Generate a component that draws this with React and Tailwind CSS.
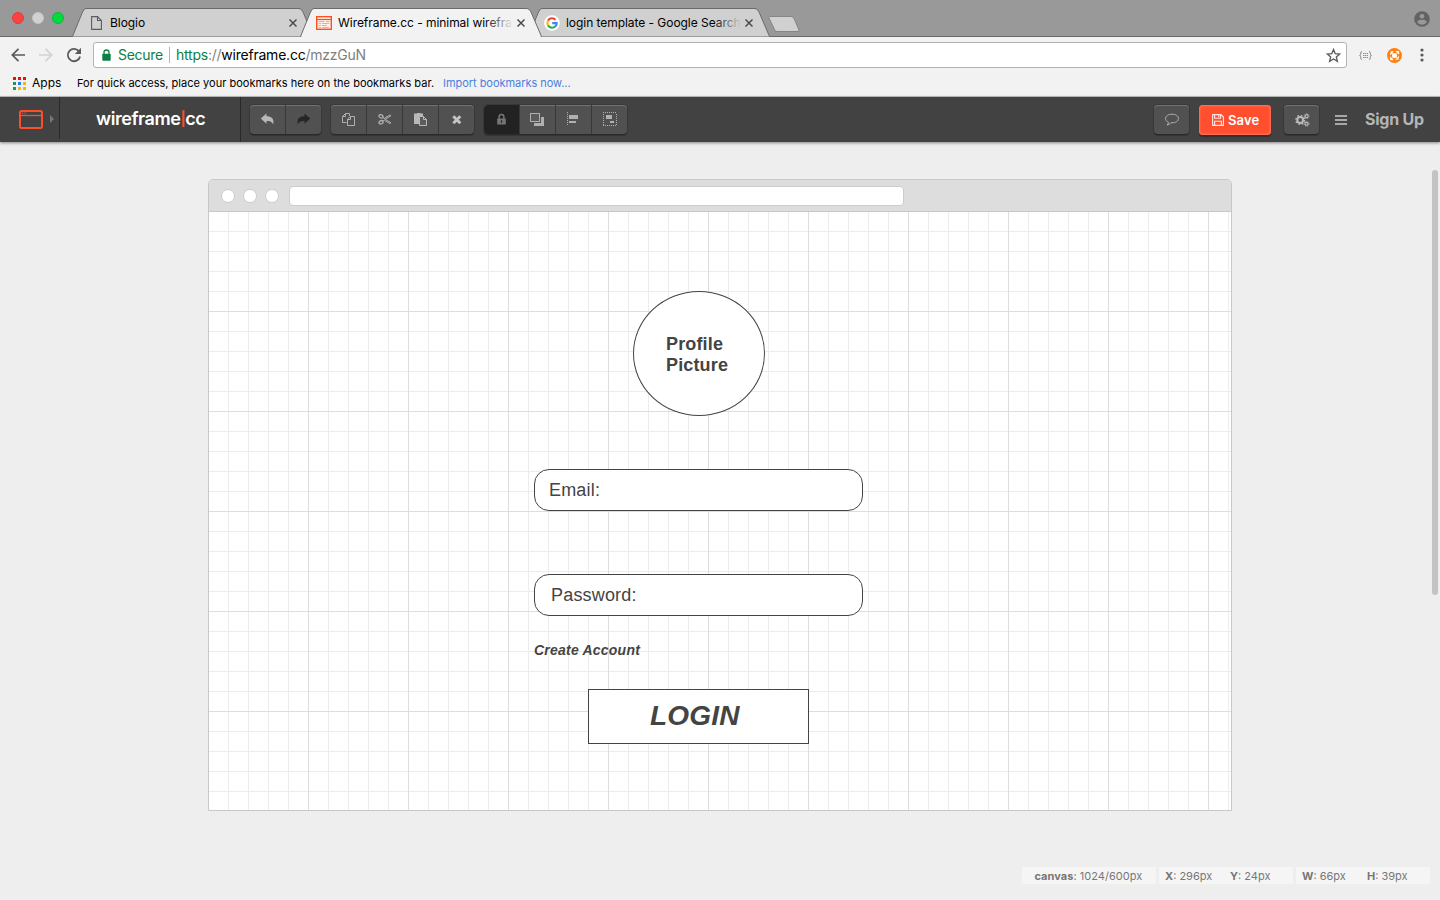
import React from "react";

function TabShape({ fill }) {
  return (
    <svg className="absolute inset-0" width="242" height="29" viewBox="0 0 242 29">
      <path d="M0.5 28.5 L10.5 4 Q12 0.5 14 0.5 L227 0.5 Q229.500 0.5 231 4 L241.500 28.500" fill={fill} stroke="#6a6a6a" />
    </svg>
  );
}

function CloseX() {
  return (
    <svg className="shrink-0" width="8" height="8" viewBox="0 0 8 8">
      <path d="M0.500 0.500 L7.500 7.500 M7.500 0.500 L0.500 7.500" stroke="#4b4b4b" strokeWidth="1.500" />
    </svg>
  );
}

function Tab({ active, icon, title, textClass }) {
  return (
    <div className={`relative -mr-3.5 h-[29px] w-[242px] shrink-0 ${active ? "z-10" : ""}`}>
      <TabShape fill={active ? "#f2f2f2" : "#d0d0d0"} />
      {active && <div className="absolute bottom-0 left-0.5 h-px w-[238px] bg-[#f2f2f2]" />}
      <div className="relative flex h-full items-center pl-4">
        <div className="flex w-[22px] shrink-0 items-center">{icon}</div>
        <div className="relative w-[175px] whitespace-nowrap text-[12px] leading-4 text-black">
          <span className={textClass}>{title}</span>
          <div className={`absolute inset-y-0 right-0 w-7 bg-linear-to-r from-transparent ${active ? "to-[#f2f2f2]" : "to-[#d0d0d0]"}`} />
        </div>
        <div className="ml-1"><CloseX /></div>
      </div>
    </div>
  );
}

const PageIcon = () => (
  <svg className="ml-[3px]" width="11" height="14" viewBox="0 0 11 14" fill="none" stroke="#5c5c5c" strokeWidth="1.100">
    <path d="M0.600 0.600 H6.500 L10.400 4.500 V13.400 H0.600 Z M6.500 0.600 V4.500 H10.400" />
  </svg>
);

const WireIcon = () => (
  <svg width="16" height="14" viewBox="0 0 16 14">
    <rect x="0.700" y="0.700" width="14.600" height="12.600" fill="#fff0e8" stroke="#ff4f1f" strokeWidth="1.400" />
    <path d="M1 3.500H15" stroke="#ff4f1f" strokeWidth="1.200" />
    <path d="M2 2.100h1M4 2.100h1M6 2.100h8" stroke="#ffd9c8" strokeWidth="0.900" />
    <path d="M2.500 5.500h6M10 5.500h3.500M2.500 7.500h2.500M6 7.500h7.500M2.500 9.500h2.500M6 9.500h5M2.500 11.500h2.500M6 11.500h7" stroke="#ffa580" />
  </svg>
);

const GoogleIcon = () => (
  <svg width="16" height="16" viewBox="0 0 16 16">
    <circle cx="8" cy="8" r="7.800" fill="#fff" />
    <g fill="none" strokeWidth="2.100">
      <path d="M4 5.600A4.700 4.700 0 0 1 11.500 4.800" stroke="#ea4335" />
      <path d="M4 5.600A4.700 4.700 0 0 0 4 10.500" stroke="#fbbc05" />
      <path d="M4 10.400A4.700 4.700 0 0 0 11.200 11.500" stroke="#34a853" />
      <path d="M11.100 11.500A4.700 4.700 0 0 0 12.700 8.100H8.200" stroke="#4285f4" />
    </g>
  </svg>
);

function TitleBar() {
  return (
    <div className="flex h-[37px] items-end border-b border-[#6a6a6a] bg-[#999999]">
      <div className="flex h-[37px] w-[72px] shrink-0 items-center gap-2 pl-3">
        <span className="size-3 rounded-full border border-[#e33b3c] bg-[#fd4245]" />
        <span className="size-3 rounded-full border border-[#c4c4c4] bg-[#d2d2d2]" />
        <span className="size-3 rounded-full border border-[#03bf37] bg-[#04d940]" />
      </div>
      <div className="-mb-px flex">
        <Tab title="Blogio" icon={<PageIcon />} textClass="tracking-[-0.05px]" />
        <Tab active title="Wireframe.cc - minimal wirefra" icon={<WireIcon />} textClass="tracking-[-0.05px]" />
        <Tab title="login template - Google Search" icon={<GoogleIcon />} textClass="tracking-[-0.05px]" />
      </div>
      <svg className="mb-[3px] ml-[11px]" width="34" height="18" viewBox="0 0 34 18">
        <path d="M2.500 1.500H24Q26 1.500 27 3.500L32 15Q32.500 16.500 31 16.500H10Q8.500 16.500 7.500 14.500L2 3Q1.500 1.500 2.500 1.500Z" fill="#d0d0d0" stroke="#858585" />
      </svg>
      <svg className="mr-2.5 mb-[9px] ml-auto" width="16" height="16" viewBox="0 0 16 16">
        <circle cx="8" cy="8" r="7.800" fill="#636363" />
        <circle cx="8" cy="5.300" r="2.300" fill="#999" />
        <path d="M3.300 11.200C3.300 9.400 6 8.700 8 8.700S12.700 9.400 12.700 11.200C11.600 12.800 10 13.500 8 13.500S4.400 12.800 3.300 11.200Z" fill="#999" />
      </svg>
    </div>
  );
}

function AddressBar() {
  return (
    <div className="flex h-[33px] items-center bg-[#f2f2f2] pt-[3px]">
      <div className="flex w-[93px] shrink-0 items-center pl-[11px]">
        <svg width="14" height="14" viewBox="0 0 14 14" fill="none" stroke="#5a5a5a" strokeWidth="1.700"><path d="M14 7H1.500M7.500 0.800L1.300 7L7.500 13.200" /></svg>
        <svg className="ml-[14px]" width="14" height="14" viewBox="0 0 14 14" fill="none" stroke="#d3d3d3" strokeWidth="1.700"><path d="M0 7H12.500M6.500 0.800L12.700 7L6.500 13.200" /></svg>
        <svg className="ml-[13px]" width="16" height="16" viewBox="0 0 16 16"><path d="M13.200 4.500A6.200 6.200 0 1 0 14.100 9.500" fill="none" stroke="#5a5a5a" strokeWidth="1.800" /><path d="M15 0.800V7H8.800Z" fill="#5a5a5a" /></svg>
      </div>
      <div className="flex h-[26px] w-[1254px] items-center rounded-[3px] border border-[#b3b3b3] bg-white pr-[5px] pl-2 text-[14px] leading-5 whitespace-nowrap">
        <svg width="9" height="12" viewBox="0 0 9 12"><path d="M2 5.500V3.500a2.500 2.500 0 0 1 5 0v2" fill="none" stroke="#0b8043" strokeWidth="1.300" /><rect x="0.300" y="4.800" width="8.400" height="6.900" rx="0.800" fill="#0b8043" /></svg>
        <span className="ml-[7px] w-[45px] tracking-[-0.3px] text-[#0b8043]">Secure</span>
        <span className="mx-[6px] h-4 w-px bg-[#b5b5b5]" />
        <span className="tracking-[-0.23px] text-[#808080]"><span className="text-[#0b8043]">https</span>://<span className="text-black">wireframe.cc</span>/mzzGuN</span>
        <svg className="ml-auto" width="15" height="15" viewBox="0 0 15 15"><path d="M7.500 1.500L9.200 5.600L13.700 6L10.300 8.900L11.400 13.300L7.500 10.900L3.600 13.300L4.700 8.900L1.300 6L5.800 5.600Z" fill="none" stroke="#5a5a5a" strokeWidth="1.300" /></svg>
      </div>
      <div className="flex flex-1 items-center pl-[12px]">
        <svg width="13" height="9" viewBox="0 0 13 9" fill="none" stroke="#8f8f8f"><path d="M3 0.500Q1.700 0.500 1.700 2V3.200Q1.700 4.500 0.500 4.500Q1.700 4.500 1.700 5.800V7Q1.700 8.500 3 8.500M10 0.500Q11.300 0.500 11.300 2V3.200Q11.300 4.500 12.500 4.500Q11.300 4.500 11.300 5.800V7Q11.300 8.500 10 8.500" /><path d="M4 2.500H9M4 4.500H9M4 6.500H9" strokeDasharray="1.400 0.400" /></svg>
        <svg className="ml-[15px]" width="15" height="15" viewBox="0 0 15 15"><circle cx="7.500" cy="7.500" r="7.400" fill="#ff7f0e" /><circle cx="7.500" cy="7.500" r="2.500" fill="#fff" /><path d="M3.300 6.800A4.400 4.400 0 0 1 6.300 3.300M8.800 3.200L11.500 3.500L11.700 6.300M11.700 8.500A4.400 4.400 0 0 1 8.500 11.700M6.300 11.800L3.600 11.400L3.300 8.800M3.800 3.500L5.700 5.500M11.500 11.500L9.400 9.400M3.500 11.500L5.500 9.500M11.500 3.500L9.500 5.500" fill="none" stroke="#fff" strokeWidth="1.100" /></svg>
        <svg className="ml-[18px]" width="4" height="14" viewBox="0 0 4 14" fill="#5a5a5a"><circle cx="2" cy="2" r="1.600" /><circle cx="2" cy="7" r="1.600" /><circle cx="2" cy="12" r="1.600" /></svg>
      </div>
    </div>
  );
}

const DOTS = ["bg-[#f20d0d]", "bg-[#f20d0d]", "bg-[#f20d0d]", "bg-[#109d58]", "bg-[#1b7ff0]", "bg-[#fdb205]", "bg-[#109d58]", "bg-[#fdb205]", "bg-[#fdb205]"];

function Bookmarks() {
  return (
    <div className="flex h-[27px] items-center border-b border-[#c2c2c2] bg-[#f2f2f2] pl-[13px] text-[11px] leading-4 whitespace-nowrap text-black">
      <div className="grid grid-cols-3 gap-[2px]">
        {DOTS.map((c, i) => <span key={i} className={`size-[3px] ${c}`} />)}
      </div>
      <span className="ml-[6px] w-[45px] text-[12px]">Apps</span>
      <span className="w-[366px] tracking-[0.02px]">For quick access, place your bookmarks here on the bookmarks bar.</span>
      <span className="tracking-[-0.04px] text-[#4a7fe0]">Import bookmarks now...</span>
    </div>
  );
}

const ICON = {
  undo: <path d="M6.500 1.500V4.200C11 4.200 14.500 6 13.200 12.500C12 9.500 10 8.900 6.500 8.900V11.700L0.800 6.600Z" fill="#b8b8b8" />,
  redo: <path d="M7.500 1.500V4.200C3 4.200 -0.500 6 0.800 12.500C2 9.500 4 8.900 7.500 8.900V11.700L13.200 6.600Z" fill="#262626" />,
  copy: <path d="M5.500 10.500H1.500V4.500L4.500 1.500H8.500V4M4.500 1.500V4.500H1.500M6.500 7L9.500 4.500H13.500V13.500H6.500ZM9.500 4.500V7.500H6.500" fill="none" stroke="#b0b0b0" />,
  cut: <g fill="none" stroke="#b0b0b0"><ellipse cx="3" cy="4.300" rx="2.100" ry="1.600" transform="rotate(25 3 4.300)" strokeWidth="1.300" /><ellipse cx="3" cy="10.300" rx="2.100" ry="1.600" transform="rotate(-25 3 10.300)" strokeWidth="1.300" /><path d="M4.800 5.500L7.500 7L13 3.700L11.800 3.100L7 5.900M4.800 9.100L7.500 7.500L13 10.800L11.800 11.500L7 8.700" strokeWidth="1" /></g>,
  paste: <g><path d="M0 1.500H3V1H6.500V1.500H9V4H5.500V12H0Z" fill="#b8b8b8" /><path d="M5.500 4.500H9.500L12.500 7.500V13.500H5.500ZM9.500 4.500V7.500H12.500" fill="#5c5c5c" stroke="#b8b8b8" /></g>,
  times: <path d="M3.300 4.200L10.300 11.200M10.300 4.200L3.300 11.200" stroke="#c4c4c4" strokeWidth="2.900" />,
  lock: <g><path d="M5.100 7V5A2.400 2.400 0 0 1 9.900 5V7" fill="none" stroke="#757575" strokeWidth="1.500" /><rect x="3.200" y="6.600" width="8.600" height="6" rx="0.600" fill="#757575" /><path d="M7.500 8.300V10.800" stroke="#292929" strokeWidth="1.300" /></g>,
  layers: <g><path d="M10 5H13V14H3V11H10Z" fill="#b0b0b0" /><rect x="-0.500" y="1.500" width="9" height="8" fill="#5b5b5b" stroke="#b0b0b0" /></g>,
  align: <g fill="#b0b0b0"><path d="M0.500 0V14" stroke="#b0b0b0" strokeDasharray="1 1" /><path d="M2 3H11V7H2ZM2 9H9V11H2Z" /></g>,
  group: <g fill="#b0b0b0"><path d="M0 0.500H14M0 13.500H14M0.500 2V13M13.500 2V13" stroke="#b0b0b0" strokeDasharray="1 1" /><path d="M3 3H9V7H3ZM7 9H11V11H7Z" /></g>,
};

function ToolGroup({ names, className }) {
  return (
    <div className={`flex h-[29px] overflow-hidden rounded-[4px] bg-[#515151] shadow-[inset_0_1px_0_#727272,0_1px_0_#2a2a2a,0_2px_1px_#353535,0_0_0_1px_#383838] ${className}`}>
      {names.map((n, i) => (
        <div key={n} className={`flex items-start pt-[7px] ${i ? "w-9 border-l border-[#383838] pl-[11px]" : "w-[35px] pl-[10px]"} ${n === "lock" ? "bg-[#222222]" : ""}`}>
          <svg width="14" height="14" viewBox="0 0 14 14" overflow="visible">{ICON[n]}</svg>
        </div>
      ))}
    </div>
  );
}

const BTN = "flex h-[29px] items-center justify-center rounded-[4px] bg-[#515151] shadow-[inset_0_1px_0_#727272,0_1px_0_#2a2a2a,0_2px_1px_#353535,0_0_0_1px_#383838]";

function AppBar() {
  return (
    <div className="relative z-10 flex h-[45px] shrink-0 items-start bg-[#424242] shadow-[0_1px_3px_rgba(0,0,0,0.45)]">
      <div className="flex h-[42px] w-[60px] items-center border-r border-[#292929] pt-0.5 pl-[19px]">
        <svg width="24" height="19" viewBox="0 0 24 19" fill="none" stroke="#fd4d2d" strokeWidth="2"><rect x="1" y="1" width="22" height="17" rx="1.500" /><path d="M1 5.500H23" strokeWidth="1.300" /><path d="M3 3.200H4.200M5.600 3.200H6.800" strokeWidth="1.300" /></svg>
        <svg className="ml-[7px]" width="4" height="8" viewBox="0 0 4 8"><path d="M0 0L4 4L0 8Z" fill="#777" /></svg>
      </div>
      <div className="flex h-[45px] w-[181px] items-center border-r border-[#292929] pb-px pl-9 text-[18px] leading-6 text-white">
        <span className="flex items-center font-semibold tracking-[-0.43px] whitespace-nowrap">wireframe<span className="text-[14px] font-bold text-[#fd4d2d]">|</span>cc</span>
      </div>
      <ToolGroup className="mt-2 ml-[9px]" names={["undo", "redo"]} />
      <ToolGroup className="mt-2 ml-[10px]" names={["copy", "cut", "paste", "times"]} />
      <ToolGroup className="mt-2 ml-[10px]" names={["lock", "layers", "align", "group"]} />
      <div className={`mt-2 ml-auto w-[35px] ${BTN}`}>
        <svg width="14" height="13" viewBox="0 0 14 13" fill="none" stroke="#b5b5b5"><path d="M3.500 9.300C1.600 8.500 0.600 7.100 0.600 5.500C0.600 2.900 3.400 1.200 7 1.200S13.400 2.900 13.400 5.500S10.600 9.800 7 9.800L6 9.700C5 10.900 3.700 11.800 2 12C2.800 11.200 3.400 10.300 3.500 9.300Z" /></svg>
      </div>
      <div className="mt-2 ml-[10px] flex h-[30px] w-[72px] items-center rounded-[4px] bg-[#ff4f2e] pl-[13px] text-[13px] leading-4 font-semibold text-white shadow-[inset_0_0_2px_1px_#ff775f,0_2px_1px_#303030]">
        <svg className="mr-1 mb-px" width="12" height="12" viewBox="0 0 12 12" fill="none" stroke="#ffe6df" strokeWidth="1.100"><path d="M0.600 0.600H9L11.400 3V11.400H0.600ZM2.600 0.600V4.300H8.600V0.600M6.800 1V3.200M2.600 11.400V7.200H9.400V11.400" /></svg>
        <span className="tracking-[0.1px]">Save</span>
      </div>
      <div className={`mt-2 ml-[13px] w-[35px] ${BTN}`}>
        <svg className="ml-px" width="15" height="14" viewBox="0 0 15 14" fill="none" stroke="#b9b9b9">
          <circle cx="5.200" cy="7" r="2.900" strokeWidth="2" /><circle cx="5.200" cy="7" r="4.300" strokeWidth="1.500" strokeDasharray="1.700 1.677" />
          <circle cx="11.600" cy="3.200" r="1.500" strokeWidth="1.200" /><circle cx="11.600" cy="3.200" r="2.400" strokeWidth="1" strokeDasharray="0.940 0.940" />
          <circle cx="11.600" cy="10.800" r="1.500" strokeWidth="1.200" /><circle cx="11.600" cy="10.800" r="2.400" strokeWidth="1" strokeDasharray="0.940 0.940" />
        </svg>
      </div>
      <div className="mt-[18px] ml-[16px] flex w-3 flex-col gap-[2px]">
        <span className="h-[2px] bg-[#a8a8a8]" /><span className="h-[2px] bg-[#a8a8a8]" /><span className="h-[2px] bg-[#a8a8a8]" />
      </div>
      <div className="mt-[10px] mr-[14px] ml-[18px] w-[61px] text-[16px] leading-6 font-bold tracking-[-0.25px] whitespace-nowrap text-[#b5b5b5]">Sign Up</div>
    </div>
  );
}

function Canvas() {
  return (
    <div className="h-[632px] w-[1024px] overflow-hidden rounded-t-[5px] border border-[#c8c8c8] bg-white">
      <div className="flex h-[32px] items-center border-b border-[#c8c8c8] bg-[#dddddd] pl-3">
        <div className="flex gap-2">
          <span className="size-[14px] rounded-full border border-[#cccccc] bg-white" />
          <span className="size-[14px] rounded-full border border-[#cccccc] bg-white" />
          <span className="size-[14px] rounded-full border border-[#cccccc] bg-white" />
        </div>
        <div className="ml-[10px] h-5 w-[615px] rounded-[4px] border border-[#cccccc] bg-white" />
      </div>
      <div className="relative h-[598px] bg-[linear-gradient(to_right,transparent_99px,#dddddd_99px),linear-gradient(to_bottom,transparent_99px,#dddddd_99px),linear-gradient(to_right,transparent_19px,#ececec_19px),linear-gradient(to_bottom,transparent_19px,#ececec_19px)] bg-[length:100px_100px,100px_100px,20px_20px,20px_20px] font-['Liberation_Sans',sans-serif] text-[#444444]">
        <div className="absolute top-[79px] left-[424px] flex h-[125px] w-[132px] items-center rounded-[50%] border border-[#444444] bg-white pt-0.5 pl-8 text-[18px] leading-[21px] font-bold tracking-[0.15px]"><div>Profile<br />Picture</div></div>
        <div className="absolute top-[257px] left-[325px] flex h-[42px] w-[329px] items-center rounded-[15px] border border-[#444444] bg-white pl-[14px] text-[18px] leading-5 tracking-[0.18px]">Email:</div>
        <div className="absolute top-[362px] left-[325px] flex h-[42px] w-[329px] items-center rounded-[15px] border border-[#444444] bg-white pl-[16px] text-[18px] leading-5 tracking-[0.18px]">Password:</div>
        <div className="absolute top-[429px] left-[325px] text-[14px] leading-[18px] font-bold tracking-[0.22px] whitespace-nowrap italic">Create Account</div>
        <div className="absolute top-[477px] left-[379px] flex h-[55px] w-[221px] items-center border border-[#444444] bg-white pb-0.5 pl-[61px] text-[28px] leading-8 font-bold tracking-[0.2px] italic">LOGIN</div>
      </div>
    </div>
  );
}

function Status() {
  return (
    <div className="mr-2.5 flex gap-[3px] self-end text-[11px] leading-[19px] whitespace-nowrap text-[#777777]">
      <div className="h-[17px] w-[134px] bg-[#f5f5f5] pl-[12.500px] tracking-[0.04px]"><b className="font-bold">canvas</b>: 1024/600px</div>
      <div className="flex h-[17px] w-[134px] bg-[#f5f5f5] pl-[6px]"><span className="w-[65px]"><b>X</b>: 296px</span><span><b>Y</b>: 24px</span></div>
      <div className="flex h-[17px] w-[134px] bg-[#f5f5f5] pl-[6px]"><span className="w-[65px]"><b>W</b>: 66px</span><span><b>H</b>: 39px</span></div>
    </div>
  );
}

export default function App() {
  return (
    <div className="flex h-[900px] w-[1440px] flex-col overflow-hidden bg-[#eeeeee] font-['Inter',sans-serif]">
      <TitleBar />
      <AddressBar />
      <Bookmarks />
      <AppBar />
      <div className="relative flex flex-1 flex-col items-center justify-between pt-[37px] pb-4">
        <Canvas />
        <Status />
        <div className="absolute top-[28px] right-[2px] h-[425px] w-[6px] rounded-full bg-[#c3c3c3]" />
      </div>
    </div>
  );
}
